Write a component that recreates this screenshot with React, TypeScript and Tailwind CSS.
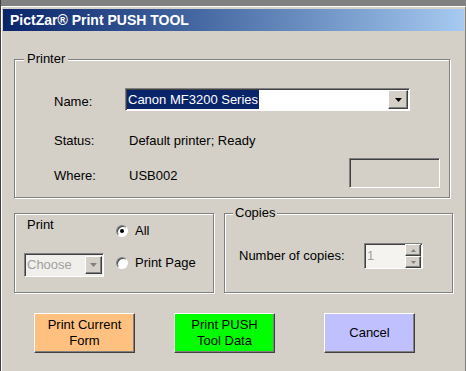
import React from "react";

const sunken =
  "border border-t-[#808080] border-l-[#808080] border-b-white border-r-white shadow-[inset_1px_1px_0_#404040]";
const raised =
  "border border-t-white border-l-white border-b-[#404040] border-r-[#404040] shadow-[inset_-1px_-1px_0_#808080]";
const etched = "border border-[#808080] shadow-[inset_1px_1px_0_white,1px_1px_0_white]";

function Arrow({ color = "#000" }: { color?: string }) {
  return (
    <svg width="7" height="4" viewBox="0 0 7 4">
      <path d="M0 0h7L3.5 4z" fill={color} />
    </svg>
  );
}

function Radio({ checked, label }: { checked?: boolean; label: string }) {
  return (
    <div className="flex h-4 items-center">
      <span className={`flex h-3 w-3 items-center justify-center rounded-full bg-white ${sunken}`}>
        {checked && <span className="h-1 w-1 rounded-full bg-black" />}
      </span>
      <span className="ml-[7px]">{label}</span>
    </div>
  );
}

export default function App() {
  return (
    <div className="h-[371px] w-[466px] overflow-hidden border-l border-[#404040] bg-[#808080] pt-[6px] font-['Liberation_Sans',Arial,sans-serif] text-[13px] leading-4 text-black">
      <div className="h-full border-l border-t border-r border-l-white border-t-white border-r-[#808080] bg-[#d4d0c8]">
        {/* Title bar */}
        <div className="mx-[1px] mt-[2px] flex h-[22px] items-center bg-gradient-to-r from-[#0a246a] to-[#a6caf0] pl-[7px] text-[14px] font-bold text-white">
          PictZar® Print PUSH TOOL
        </div>

        <div className="px-3">
          {/* Printer */}
          <div className={`relative mt-[28px] h-[139px] w-[436px] ${etched}`}>
            <span className="absolute -top-[9px] left-[9px] bg-[#d4d0c8] px-[3px]">Printer</span>

            <div className="mt-[28px] flex items-center">
              <span className="ml-[39px] mt-[4px] w-[71px]">Name:</span>
              <div className={`flex h-[23px] w-[285px] items-center bg-white pl-[1px] pr-[1px] ${sunken}`}>
                <span className="bg-[#0a246a] px-[1px] leading-[19px] text-white">Canon MF3200 Series</span>
                <div className={`ml-auto flex h-[19px] w-[20px] items-center justify-center bg-[#d4d0c8] ${raised}`}>
                  <Arrow />
                </div>
              </div>
            </div>

            <div className="mt-[20px] flex h-5 items-center">
              <span className="ml-[39px] w-[75px]">Status:</span>
              <span>Default printer; Ready</span>
            </div>

            <div className="mt-[7px] flex items-start">
              <span className="ml-[39px] mt-[10px] w-[75px]">Where:</span>
              <span className="mt-[10px]">USB002</span>
              <div className={`ml-auto mr-[9px] h-[30px] w-[91px] ${sunken}`} />
            </div>
          </div>

          <div className="mt-[15px] flex gap-[10px]">
            {/* Print */}
            <div className={`flex h-[80px] w-[200px] ${etched}`}>
              <div className="w-[101px]">
                <div className="ml-3 mt-[3px]">Print</div>
                <div className={`ml-[9px] mt-[20px] flex h-[24px] w-[80px] items-center bg-[#f0efec] pl-[2px] text-[#a0a0a0] ${sunken}`}>
                  Choose
                  <div className={`ml-auto mr-[1px] flex h-[18px] w-[17px] items-center justify-center bg-[#d4d0c8] ${raised}`}>
                    <Arrow color="#808080" />
                  </div>
                </div>
              </div>
              <div>
                <div className="mt-[9px]">
                  <Radio checked label="All" />
                </div>
                <div className="mt-[16px]">
                  <Radio label="Print Page" />
                </div>
              </div>
            </div>

            {/* Copies */}
            <div className={`relative h-[80px] w-[229px] ${etched}`}>
              <span className="absolute -top-[9px] left-[8px] bg-[#d4d0c8] px-[2px]">Copies</span>
              <div className="ml-[14px] mt-[29px] flex items-center">
                <span className="w-[125px]">Number of copies:</span>
                <div className={`flex h-[26px] w-[59px] items-center bg-[#f4f3f0] pl-[2px] text-[#a0a0a0] ${sunken}`}>
                  1
                  <div className="ml-auto mr-[1px] flex flex-col">
                    <div className={`flex h-[12px] w-[16px] items-center justify-center bg-[#d4d0c8] ${raised}`}>
                      <svg width="5" height="3" viewBox="0 0 5 3">
                        <path d="M0 3h5L2.5 0z" fill="#808080" />
                      </svg>
                    </div>
                    <div className={`flex h-[12px] w-[16px] items-center justify-center bg-[#d4d0c8] ${raised}`}>
                      <svg width="5" height="3" viewBox="0 0 5 3">
                        <path d="M0 0h5L2.5 3z" fill="#808080" />
                      </svg>
                    </div>
                  </div>
                </div>
              </div>
            </div>
          </div>

          {/* Buttons */}
          <div className="mt-[20px] flex">
            <button className={`ml-[20px] h-[40px] w-[101px] bg-[#ffc080] text-center ${raised}`}>
              Print Current
              <br />
              Form
            </button>
            <button className={`ml-[39px] h-[40px] w-[101px] bg-[#00ff00] text-center ${raised}`}>
              Print PUSH
              <br />
              Tool Data
            </button>
            <button className={`ml-[49px] h-[40px] w-[91px] bg-[#c0c0ff] text-center ${raised}`}>
              Cancel
            </button>
          </div>
        </div>
      </div>
    </div>
  );
}
